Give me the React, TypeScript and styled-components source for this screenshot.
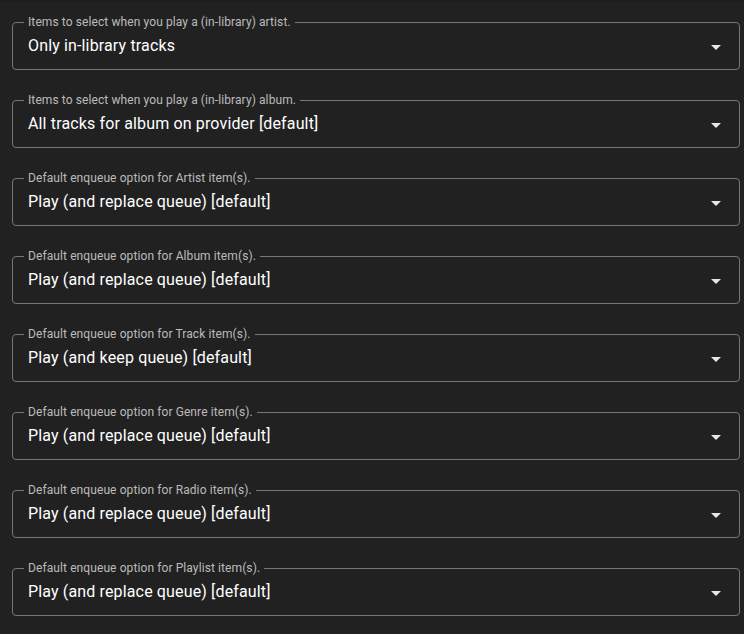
import React from "react";
import styled, { createGlobalStyle } from "styled-components";

const Global = createGlobalStyle`
  html, body { margin: 0; padding: 0; background: #212121; }
  body { font-family: Roboto, "Noto Sans", "Liberation Sans", sans-serif; }
  * { box-sizing: border-box; }
`;

const Page = styled.div`
  background: #212121;
  min-height: 634px;
  width: 744px;
`;

const TopStrip = styled.div`
  height: 2px;
  background: #1b1e21;
`;

const List = styled.div`
  display: flex;
  flex-direction: column;
  gap: 22px;
  padding: 12px 4px 0 12px;
`;

const Field = styled.fieldset`
  margin: 0;
  padding: 0;
  border: 1px solid #767676;
  border-radius: 4px;
  min-width: 0;
`;

const Legend = styled.legend`
  margin-left: 11px;
  padding: 0 4px;
  font-size: 12px;
  line-height: 16px;
  color: rgba(255, 255, 255, 0.7);
  letter-spacing: 0.008em;
`;

const Row = styled.div`
  display: flex;
  align-items: center;
  height: 39px;
  padding: 0 11px 7px 15px;
`;

const Value = styled.div`
  flex: 1;
  font-size: 16px;
  line-height: 24px;
  color: #ffffff;
  letter-spacing: 0.009em;
  white-space: nowrap;
`;

const Arrow = styled.svg`
  width: 24px;
  height: 24px;
  flex: none;
  margin-top: 1px;
`;

const items: { label: string; value: string }[] = [
  { label: "Items to select when you play a (in-library) artist.", value: "Only in-library tracks" },
  { label: "Items to select when you play a (in-library) album.", value: "All tracks for album on provider [default]" },
  { label: "Default enqueue option for Artist item(s).", value: "Play (and replace queue) [default]" },
  { label: "Default enqueue option for Album item(s).", value: "Play (and replace queue) [default]" },
  { label: "Default enqueue option for Track item(s).", value: "Play (and keep queue) [default]" },
  { label: "Default enqueue option for Genre item(s).", value: "Play (and replace queue) [default]" },
  { label: "Default enqueue option for Radio item(s).", value: "Play (and replace queue) [default]" },
  { label: "Default enqueue option for Playlist item(s).", value: "Play (and replace queue) [default]" },
];

export default function App() {
  return (
    <Page>
      <Global />
      <TopStrip />
      <List>
        {items.map((it) => (
          <Field key={it.label}>
            <Legend>{it.label}</Legend>
            <Row>
              <Value>{it.value}</Value>
              <Arrow viewBox="0 0 24 24">
                <path d="M7,10L12,15L17,10H7Z" fill="#e6e6e6" />
              </Arrow>
            </Row>
          </Field>
        ))}
      </List>
    </Page>
  );
}
